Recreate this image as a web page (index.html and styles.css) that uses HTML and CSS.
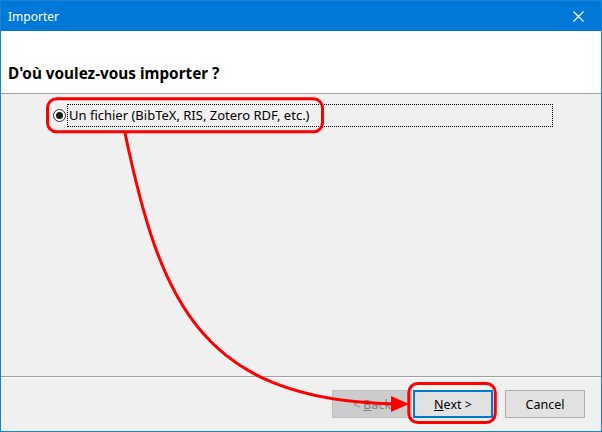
FILE: index.html
```html
<!DOCTYPE html>
<html lang="fr">
<head>
<meta charset="utf-8">
<title>Importer</title>
<link rel="stylesheet" href="styles.css">
</head>
<body>
<div class="window">
  <div class="titlebar">
    <span class="title">Importer</span>
    <span class="close">
      <svg width="11" height="11" viewBox="0 0 11 11"><path d="M0.5 0.5 L10.5 10.5 M10.5 0.5 L0.5 10.5" stroke="#fff" stroke-width="1.1" fill="none"/></svg>
    </span>
  </div>
  <div class="header">
    <h1 class="heading">D'où voulez-vous importer ?</h1>
  </div>
  <div class="content">
    <div class="option">
      <span class="radio"><span class="dot"></span></span>
      <span class="focus">Un fichier (BibTeX, RIS, Zotero RDF, etc.)</span>
    </div>
  </div>
  <div class="footer">
    <button class="btn disabled"><span>&lt; <u>B</u>ack</span></button>
    <button class="btn primary"><u>N</u>ext &gt;</button>
    <button class="btn cancel">Cancel</button>
  </div>
  <svg class="annot" width="602" height="432" viewBox="0 0 602 432">
    <rect x="47.5" y="98.8" width="275" height="33" rx="9" ry="9" fill="none" stroke="#ff0000" stroke-width="3"/>
    <rect x="408.8" y="383.5" width="86.5" height="39" rx="9" ry="9" fill="none" stroke="#ff0000" stroke-width="3"/>
    <path d="M125 133 C160 300 200 400 394 404" fill="none" stroke="#ff0000" stroke-width="3"/>
    <polygon points="391,396 409,404 391,412" fill="#ff0000"/>
  </svg>
</div>
</body>
</html>
```
FILE: styles.css
```css
* { box-sizing: border-box; }
html, body { margin: 0; padding: 0; background: #ffffff; }
body { font-family: "Noto Sans", "Open Sans", "Liberation Sans", sans-serif; }

.window {
  position: relative;
  width: 602px;
  height: 432px;
  border: 1px solid #1883d7;
  background: #f0f0f0;
  display: flex;
  flex-direction: column;
  overflow: hidden;
}

.titlebar {
  height: 30px;
  background: #0078d7;
  color: #ffffff;
  display: flex;
  align-items: center;
  justify-content: space-between;
  padding-left: 7px;
  font-size: 12px;
  flex: none;
}
.title { line-height: 30px; padding-top: 1px; }
.close {
  width: 45px;
  height: 30px;
  display: flex;
  align-items: center;
  justify-content: center;
  padding-top: 1px;
}

.header {
  height: 63px;
  background: #ffffff;
  border-bottom: 1px solid #a0a0a0;
  padding: 32px 0 0 7px;
  flex: none;
}
.heading {
  margin: 0;
  font-size: 15.3px;
  line-height: 20px;
  font-weight: bold;
  color: #000000;
}

.content {
  flex: 1;
  padding: 10px 0 0 52px;
}
.option {
  display: flex;
  align-items: center;
  height: 23px;
}
.radio {
  width: 13px;
  height: 13px;
  border-radius: 50%;
  border: 1px solid #333333;
  background: #ffffff;
  display: flex;
  align-items: center;
  justify-content: center;
  flex: none;
}
.dot {
  width: 7px;
  height: 7px;
  border-radius: 50%;
  background: #1a1a1a;
}
.focus {
  margin-left: 1px;
  width: 486px;
  height: 23px;
  border: 1px dotted #000000;
  font-size: 13px;
  line-height: 21px;
  padding-left: 1px;
  color: #000000;
}

.footer {
  height: 55px;
  border-top: 1px solid #a0a0a0;
  box-shadow: inset 0 1px 0 #ffffff;
  padding: 13px 16px 0 0;
  display: flex;
  justify-content: flex-end;
  align-items: flex-start;
  flex: none;
}
.btn {
  width: 80px;
  height: 28px;
  font-family: inherit;
  font-size: 12.5px;
  color: #000000;
  background: #e1e1e1;
  border: 1px solid #adadad;
  padding: 0;
  margin: 0;
}
.btn.disabled {
  background: #cccccc;
  border-color: #bfbfbf;
  color: #838383;
}
.btn.primary {
  margin-left: 1px;
  border: 2px solid #0078d7;
}
.btn.cancel {
  margin-left: 12px;
}

.annot {
  position: absolute;
  left: -1px;
  top: -1px;
  pointer-events: none;
}
```
